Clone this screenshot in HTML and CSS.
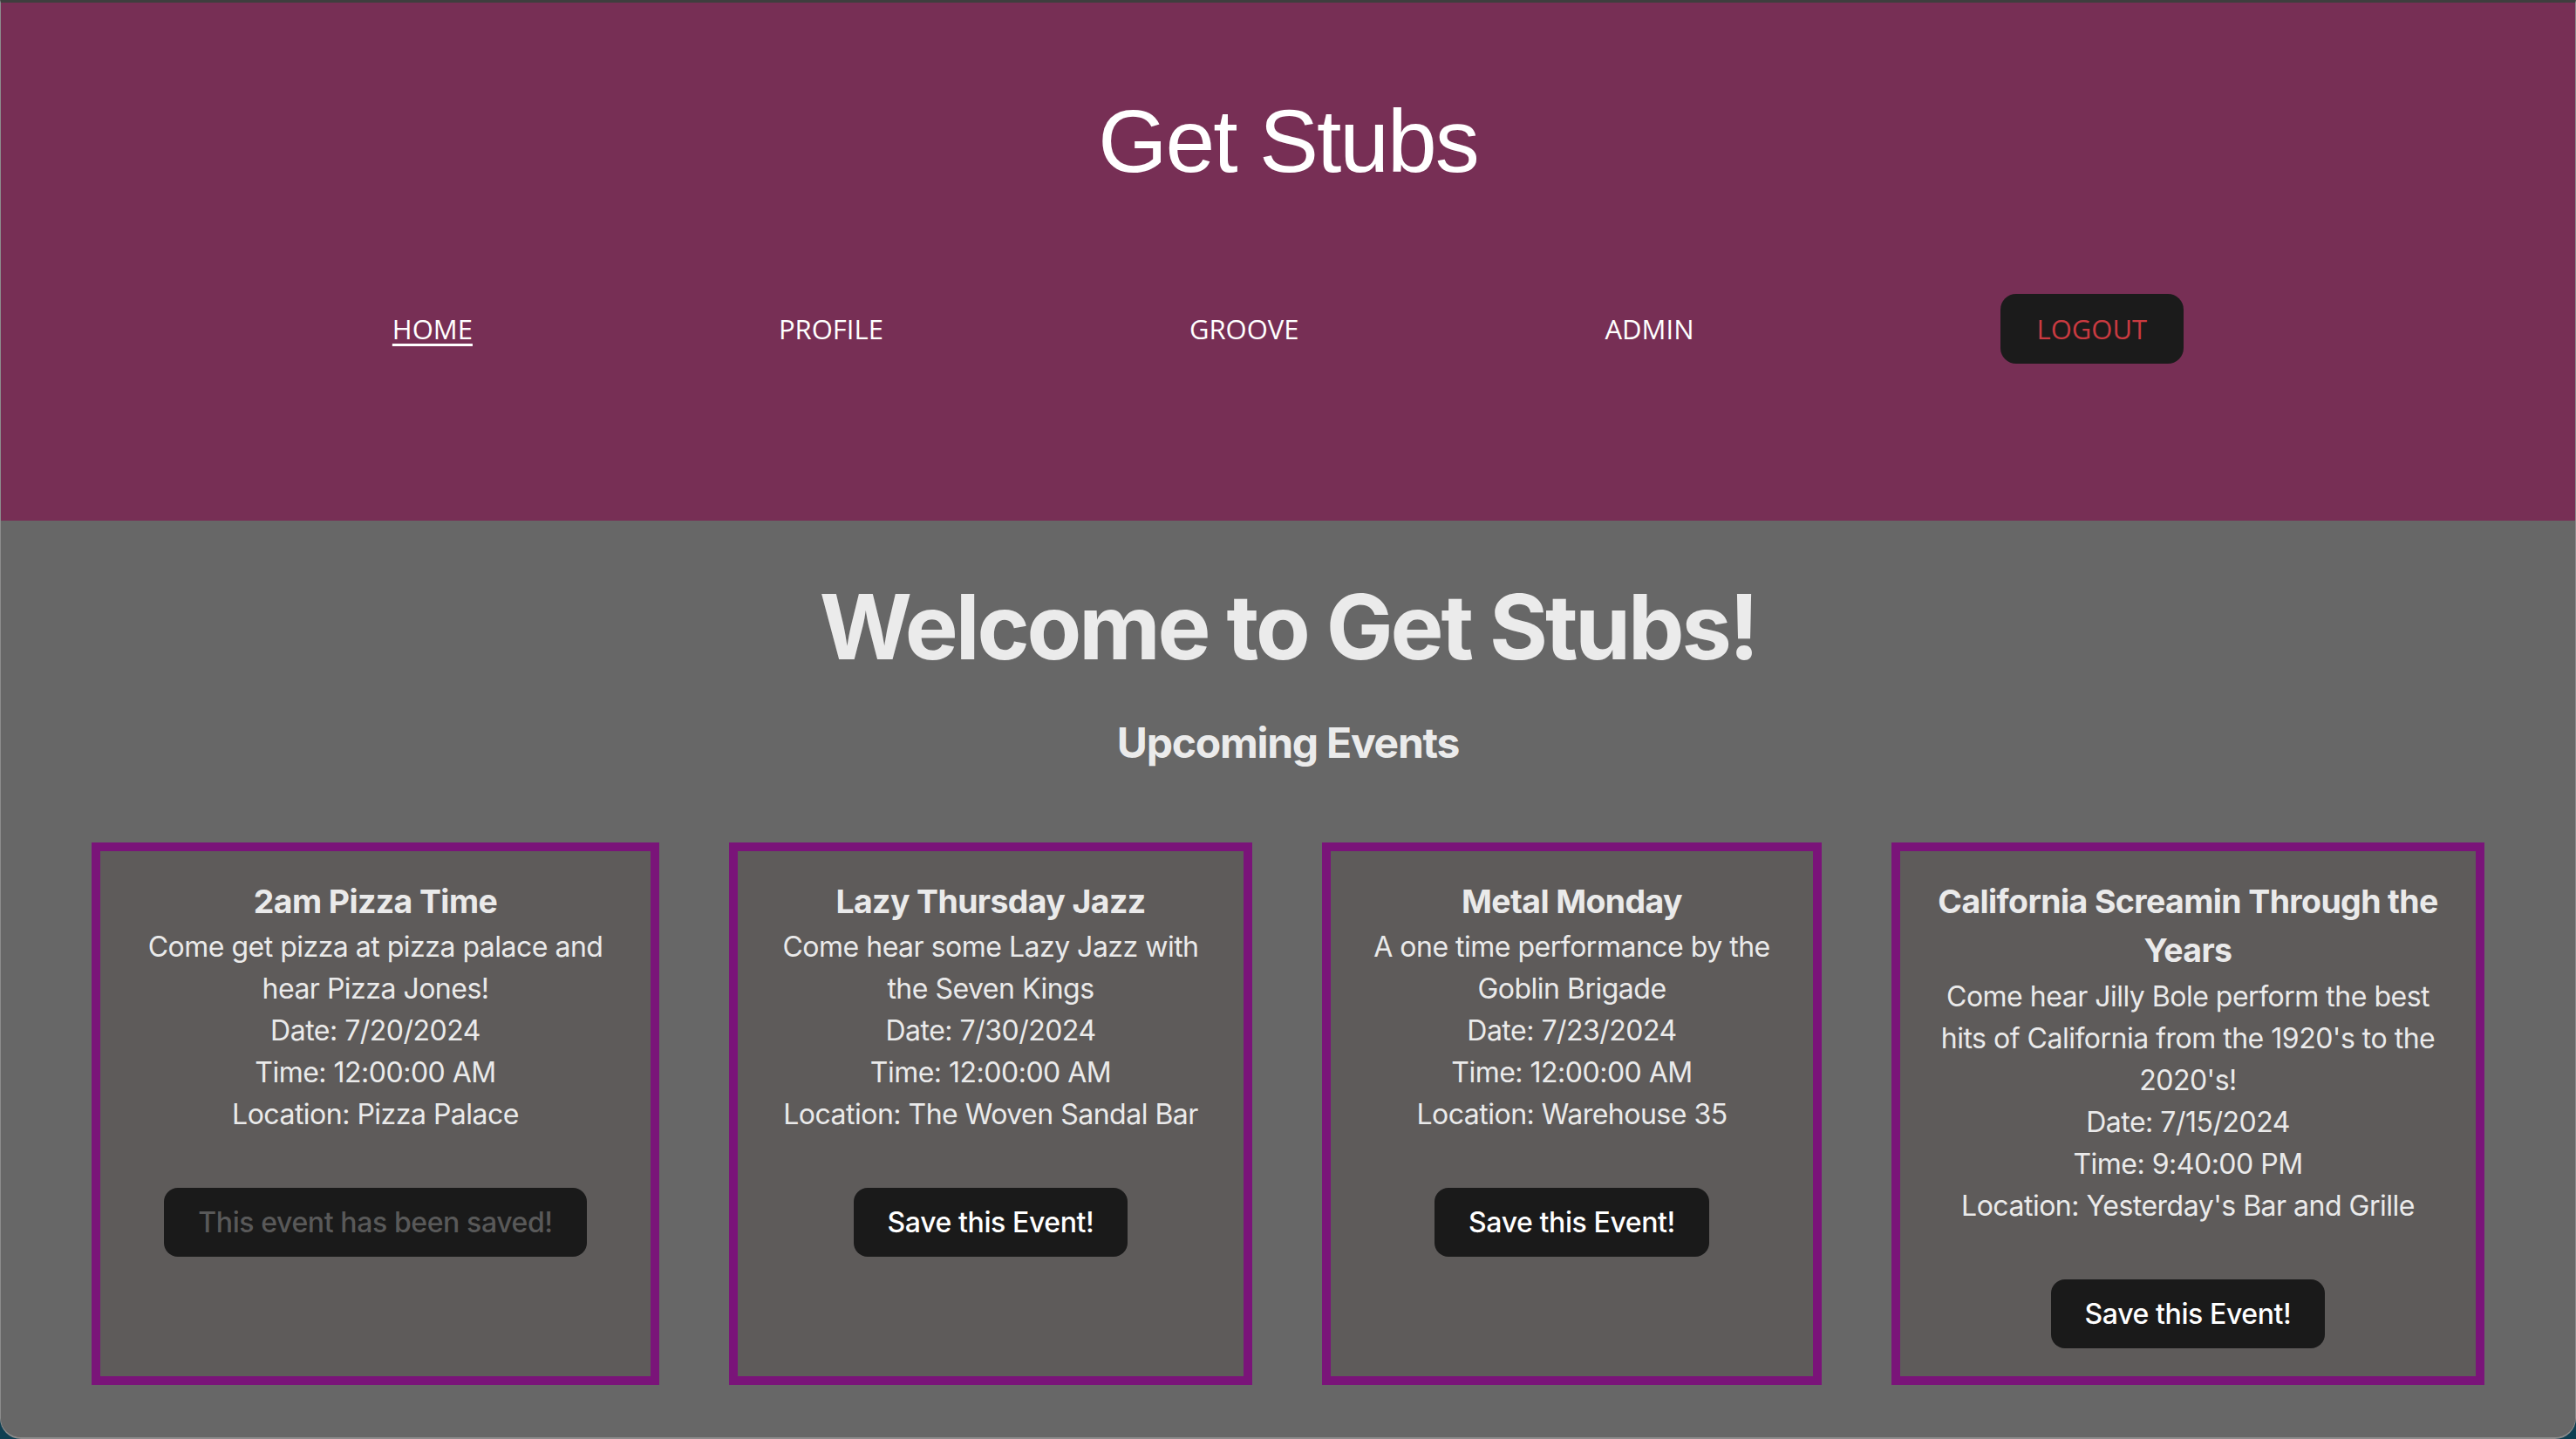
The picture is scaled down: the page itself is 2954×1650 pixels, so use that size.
FILE: index.html
```html
<!DOCTYPE html>
<html lang="en">
<head>
<meta charset="utf-8">
<title>Get Stubs</title>
<link rel="stylesheet" href="styles.css">
</head>
<body>
<div class="window">
  <header class="site-header">
    <h1 class="site-title">Get Stubs</h1>
    <nav class="site-nav">
      <a class="nav-link active" href="#">HOME</a>
      <a class="nav-link" href="#">PROFILE</a>
      <a class="nav-link" href="#">GROOVE</a>
      <a class="nav-link" href="#">ADMIN</a>
      <button class="logout-btn" type="button">LOGOUT</button>
    </nav>
  </header>
  <main class="content">
    <h1 class="welcome">Welcome to Get Stubs!</h1>
    <h2 class="section-title">Upcoming Events</h2>
    <div class="event-grid">
      <div class="event-card">
        <h3 class="event-title">2am Pizza Time</h3>
        <p class="event-line">Come get pizza at pizza palace and hear Pizza Jones!</p>
        <p class="event-line">Date: 7/20/2024</p>
        <p class="event-line">Time: 12:00:00 AM</p>
        <p class="event-line">Location: Pizza Palace</p>
        <div class="event-actions"><button class="save-btn saved" type="button">This event has been saved!</button></div>
      </div>
      <div class="event-card">
        <h3 class="event-title">Lazy Thursday Jazz</h3>
        <p class="event-line">Come hear some Lazy Jazz with the Seven Kings</p>
        <p class="event-line">Date: 7/30/2024</p>
        <p class="event-line">Time: 12:00:00 AM</p>
        <p class="event-line">Location: The Woven Sandal Bar</p>
        <div class="event-actions"><button class="save-btn" type="button">Save this Event!</button></div>
      </div>
      <div class="event-card">
        <h3 class="event-title">Metal Monday</h3>
        <p class="event-line">A one time performance by the Goblin Brigade</p>
        <p class="event-line">Date: 7/23/2024</p>
        <p class="event-line">Time: 12:00:00 AM</p>
        <p class="event-line">Location: Warehouse 35</p>
        <div class="event-actions"><button class="save-btn" type="button">Save this Event!</button></div>
      </div>
      <div class="event-card">
        <h3 class="event-title">California Screamin Through the Years</h3>
        <p class="event-line">Come hear Jilly Bole perform the best hits of California from the 1920's to the 2020's!</p>
        <p class="event-line">Date: 7/15/2024</p>
        <p class="event-line">Time: 9:40:00 PM</p>
        <p class="event-line">Location: Yesterday's Bar and Grille</p>
        <div class="event-actions"><button class="save-btn" type="button">Save this Event!</button></div>
      </div>
    </div>
  </main>
</div>
</body>
</html>
```
FILE: styles.css
```css
html, body {
  margin: 0;
  padding: 0;
}

body {
  background: #0e3f52;
  font-family: Inter, "Noto Sans", "Liberation Sans", sans-serif;
  color: rgba(255, 255, 255, 0.87);
}

.window {
  box-sizing: border-box;
  height: 1650px;
  background: #676767;
  border-top: 3px solid #3e3e3e;
  border-left: 1px solid #8c8c8c;
  border-right: 1px solid #8c8c8c;
  border-bottom: 2px solid #8c8c8c;
  border-radius: 0 0 24px 24px;
  overflow: hidden;
  display: flex;
  flex-direction: column;
}

.site-header {
  background: #772f55;
  padding: 103px 0 180px;
  display: flex;
  flex-direction: column;
  align-items: center;
}

.site-title {
  margin: 0;
  font-family: "Liberation Sans", Arial, sans-serif;
  font-weight: 400;
  font-size: 102px;
  line-height: 112px;
  letter-spacing: -2px;
  color: #ffffff;
}

.site-nav {
  margin-top: 119px;
  height: 80px;
  display: flex;
  align-items: center;
  justify-content: center;
  gap: 351px;
  font-family: "Open Sans", "Liberation Sans", sans-serif;
  font-size: 31px;
}

.nav-link {
  color: #ffffff;
  text-decoration: none;
  line-height: 40px;
}

.nav-link.active {
  text-decoration: underline;
  text-underline-offset: 5px;
  text-decoration-thickness: 3px;
}

.logout-btn {
  height: 80px;
  padding: 0 42px;
  border: 0;
  border-radius: 18px;
  background: #1b1b1b;
  color: #c93a40;
  font-family: "Open Sans", "Liberation Sans", sans-serif;
  font-size: 31px;
}

.content {
  flex: 1;
  background: #676767;
  display: flex;
  flex-direction: column;
  align-items: center;
}

.welcome {
  margin: 66px 0 0;
  font-size: 102.4px;
  line-height: 1.1;
  font-weight: 700;
  letter-spacing: -3.1px;
  color: #ebebeb;
}

.section-title {
  margin: 40px 0 0;
  font-size: 48px;
  line-height: 72px;
  font-weight: 700;
  letter-spacing: -1.25px;
  color: #ebebeb;
}

.event-grid {
  margin-top: 78px;
  display: grid;
  grid-template-columns: 651px 600px 573px 680px;
  column-gap: 80px;
  justify-content: center;
}

.event-card {
  box-sizing: border-box;
  border: 10px solid #7a1479;
  background: #5e5b5a;
  padding: 30px 30px 32px;
  text-align: center;
  font-size: 32px;
  line-height: 48px;
  letter-spacing: -0.5px;
  color: #eaeaea;
}

.event-title {
  margin: 0;
  font-size: 37.44px;
  line-height: 56.5px;
  font-weight: 700;
  letter-spacing: -0.6px;
}

.event-line {
  margin: 0;
}

.event-actions {
  margin-top: 60px;
}

.save-btn {
  font-family: Inter, "Noto Sans", sans-serif;
  font-size: 32px;
  font-weight: 500;
  line-height: 39px;
  letter-spacing: -0.4px;
  padding: 19px 38px;
  border: 1px solid transparent;
  border-radius: 16px;
  background: #1a1a1a;
  color: #ffffff;
}

.save-btn.saved {
  color: #595959;
}
```
